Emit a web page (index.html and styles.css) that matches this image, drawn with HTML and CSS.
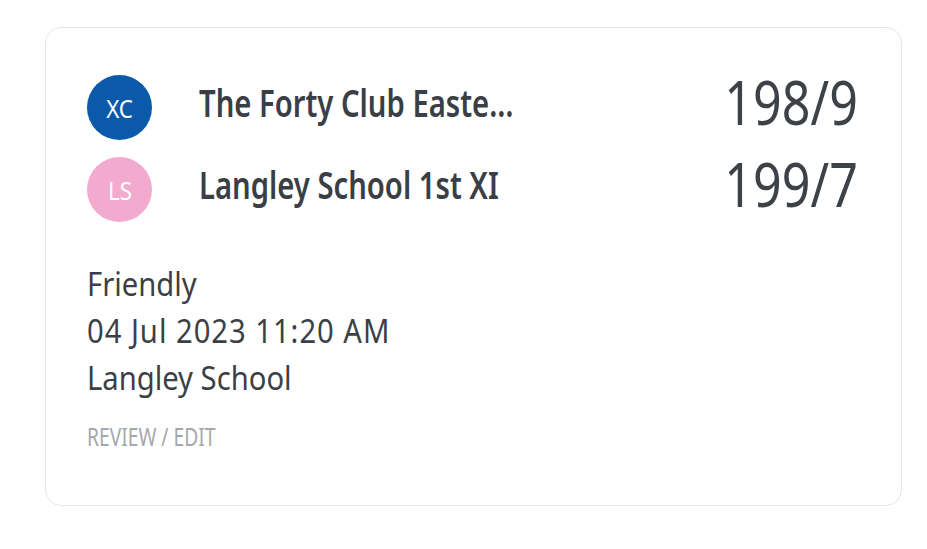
FILE: index.html
```html
<!DOCTYPE html>
<html>
<head>
<meta charset="utf-8">
<link rel="stylesheet" href="styles.css">
</head>
<body>
<div class="card">
  <div class="teams">
    <div class="team">
      <div class="avatar avatar-xc"><span class="initials">XC</span></div>
      <div class="name">The Forty Club Easte…</div>
      <div class="score">198/9</div>
    </div>
    <div class="team">
      <div class="avatar avatar-ls"><span class="initials">LS</span></div>
      <div class="name">Langley School 1st XI</div>
      <div class="score">199/7</div>
    </div>
  </div>
  <div class="details">
    <div class="line">Friendly</div>
    <div class="line line-date">04 Jul 2023 11:20 AM</div>
    <div class="line">Langley School</div>
  </div>
  <div class="action">REVIEW / EDIT</div>
</div>
</body>
</html>
```
FILE: styles.css
```css
html, body {
  margin: 0;
  padding: 0;
  background: #ffffff;
}
body {
  font-family: "Noto Sans", "Open Sans", sans-serif;
  color: #3b3f46;
  padding: 27px 25px 0 45px;
}
.card {
  box-sizing: border-box;
  width: 857px;
  height: 479px;
  border: 1.5px solid #e4e6e9;
  border-radius: 16px;
  padding: 47px 43px 0 41px;
}
.teams {
  display: flex;
  flex-direction: column;
  gap: 17px;
}
.team {
  display: flex;
  align-items: center;
  height: 65px;
}
.avatar {
  width: 65px;
  height: 65px;
  border-radius: 50%;
  display: flex;
  align-items: center;
  justify-content: center;
  color: #ffffff;
  font-size: 26px;
  flex: none;
}
.initials {
  display: inline-block;
  transform: scaleX(0.86);
}
.avatar-xc { background: #0b59a9; }
.avatar-ls { background: #f2abcf; }
.name {
  margin-left: 47px;
  margin-bottom: 11px;
  font-size: 37px;
  font-weight: 600;
  flex: 1;
  color: #3a3e45;
  white-space: nowrap;
  transform: scaleX(0.79);
  transform-origin: left center;
}
.score {
  margin-bottom: 13px;
  font-size: 62px;
  color: #3d4148;
  white-space: nowrap;
  transform: scaleX(0.81);
  transform-origin: right center;
}
.details {
  margin-top: 38px;
}
.line {
  font-size: 33px;
  line-height: 47px;
  white-space: nowrap;
  transform: scaleX(0.885);
  transform-origin: left center;
}
.line-date {
  letter-spacing: 1.1px;
}
.action {
  margin-top: 20px;
  font-size: 25px;
  line-height: 30px;
  color: #a4a8ad;
  transform: scaleX(0.77);
  transform-origin: left center;
}
```
